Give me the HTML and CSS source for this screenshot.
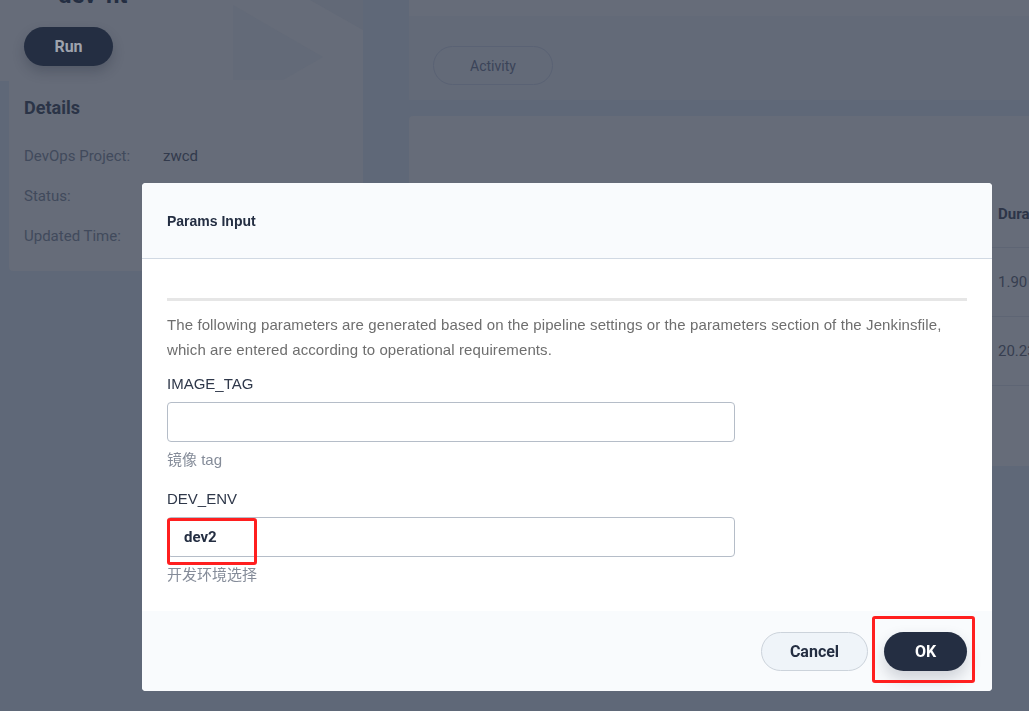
FILE: index.html
```html
<!DOCTYPE html>
<html lang="en">
<head>
    <meta charset="UTF-8">
    <title>dev-ht - Pipeline</title>
    <meta name="viewport" content="width=device-width, initial-scale=1">
    <link rel="stylesheet" href="styles.css">
</head>
<body>

    <div class="page">
        <aside class="side">
            <div class="side-top">
                <svg class="side-mark" width="363" height="81" viewBox="0 0 363 81">
                    <polygon points="233,5 323,57 283,80 233,80" fill="#636a78"/>
                    <polygon points="310,0 363,0 363,30" fill="#626977"/>
                </svg>
                <div class="pipe-title">
                    <svg width="14" height="14" viewBox="0 0 14 14">
                        <circle cx="4" cy="7" r="3" fill="none" stroke="#3a4357" stroke-width="1.5"/>
                        <path d="M7 7h6" stroke="#3a4357" stroke-width="1.5"/>
                    </svg>
                    <h1>dev-ht</h1>
                </div>
                <button class="run-btn">Run</button>
            </div>

            <div class="details">
                <h3>Details</h3>
                <div class="detail-row"><span class="detail-label">DevOps Project:</span><span class="detail-value">zwcd</span></div>
                <div class="detail-row"><span class="detail-label">Status:</span><span class="detail-value">Success</span></div>
                <div class="detail-row"><span class="detail-label">Updated Time:</span><span class="detail-value">2023-05-12 10:21:40</span></div>
            </div>
        </aside>

        <main class="content">
            <div class="card top-card"></div>
            <div class="card tabs-card">
                <button class="tab-btn">Activity</button>
            </div>
            <div class="card table-card">
                <div class="table-toolbar"></div>
                <div class="table-row table-head">
                    <span>Run ID / Status</span>
                    <span>Duration</span>
                    <span>Updated Time</span>
                </div>
                <div class="table-row">
                    <span>2 · Success</span>
                    <span>1.90 s</span>
                    <span>2023-05-12 10:21:40</span>
                </div>
                <div class="table-row">
                    <span>1 · Success</span>
                    <span>20.23 s</span>
                    <span>2023-05-12 10:18:02</span>
                </div>
                <div class="table-foot"></div>
            </div>
        </main>
    </div>

    <div class="mask">
        <div class="modal">
            <div class="modal-header">Params Input</div>

            <div class="modal-body">
                <div class="modal-bar"></div>
                <p class="modal-desc">The following parameters are generated based on the pipeline settings or the parameters section of the Jenkinsfile, which are entered according to operational requirements.</p>

                <label class="field-label">IMAGE_TAG</label>
                <input class="field-input" type="text" value="">
                <div class="field-hint">镜像 tag</div>

                <label class="field-label second">DEV_ENV</label>
                <input class="field-input" type="text" value="dev2">
                <div class="field-hint">开发环境选择</div>
            </div>

            <div class="modal-footer">
                <button class="btn btn-cancel">Cancel</button>
                <button class="btn btn-ok">OK</button>
            </div>

            <!-- red highlight boxes from the screenshot -->
            <div class="mark mark-input"></div>
            <div class="mark mark-ok"></div>
        </div>
    </div>

</body>
</html>
```

FILE: styles.css
```css
body {
    margin: 0;
    background: #5f6878;
    font-family: Roboto, "Liberation Sans", sans-serif;
    font-size: 14px;
    overflow: hidden;
}

button {
    font-family: Roboto, "Liberation Sans", sans-serif;
    cursor: pointer;
}

.page {
    display: flex;
    gap: 46px;
    width: 1300px;
}

/* left column */

.side {
    width: 363px;
    flex-shrink: 0;
}

.side-top {
    position: relative;
    display: flex;
    flex-direction: column;
    align-items: flex-start;
    height: 81px;
    padding-left: 24px;
    box-sizing: border-box;
    background: #666c79;
}

.side-mark {
    position: absolute;
    left: 0;
    top: 0;
}

.pipe-title {
    position: relative;
    display: flex;
    align-items: center;
    gap: 16px;
    height: 32px;
    margin-top: -21px;
    margin-bottom: 16px;
    padding-left: 4px;
}

.pipe-title h1 {
    margin: 0;
    font-size: 24px;
    line-height: 32px;
    color: #242e42;
}

.run-btn {
    position: relative;
    width: 89px;
    height: 39px;
    border: none;
    border-radius: 20px;
    background: #242e42;
    color: #9ea3ad;
    font-size: 16px;
    font-weight: bold;
    box-shadow: 0 6px 12px rgba(30, 38, 55, 0.25);
}

.details {
    margin-left: 9px;
    padding: 15px;
    background: #666c79;
    border-radius: 0 0 4px 4px;
}

.details h3 {
    margin: 0 0 16px;
    font-size: 18px;
    line-height: 24px;
    color: #2b3447;
}

.detail-row {
    display: flex;
    height: 40px;
    align-items: center;
    font-size: 15px;
}

.detail-label {
    width: 139px;
    color: #414a5c;
}

.detail-value {
    color: #323a4c;
}

/* right column */

.content {
    flex: 1;
    display: flex;
    flex-direction: column;
}

.card {
    background: #666c79;
}

.top-card {
    height: 16px;
}

.tabs-card {
    height: 84px;
    padding: 30px 24px 0;
    box-sizing: border-box;
    background: #636a78;
}

.tab-btn {
    width: 120px;
    height: 39px;
    border: 1px solid #5a6274;
    border-radius: 20px;
    background: transparent;
    color: #3b4459;
    font-size: 14px;
}

.table-card {
    margin-top: 16px;
    height: 350px;
    border-radius: 4px;
}

.table-toolbar {
    height: 64px;
}

.table-row {
    display: grid;
    grid-template-columns: 565px 150px 1fr;
    align-items: center;
    height: 69px;
    padding-left: 24px;
    border-bottom: 1px solid #5e6574;
    box-sizing: border-box;
    font-size: 15px;
    color: #363e50;
}

.table-head {
    height: 68px;
    font-weight: bold;
    color: #2d3548;
}

.table-foot {
    height: 80px;
}

/* modal */

.mask {
    position: fixed;
    inset: 0;
}

.modal {
    position: absolute;
    left: 142px;
    top: 183px;
    width: 850px;
    background: #fff;
    border-radius: 4px;
    overflow: hidden;
    font-family: "Liberation Sans", Arial, "Noto Sans CJK SC", sans-serif;
    font-size: 15px;
}

.modal-header {
    height: 75px;
    padding-left: 25px;
    display: flex;
    align-items: center;
    background: #f9fbfd;
    border-bottom: 1px solid #d1d9e3;
    font-weight: bold;
    font-size: 14px;
    color: #242e42;
}

.modal-body {
    padding: 39px 25px 26px;
}

.modal-bar {
    height: 3px;
    background: #e6e6e6;
}

.modal-desc {
    margin: 11px 0 0;
    line-height: 25px;
    letter-spacing: 0.1px;
    color: #6e6e6e;
}

.field-label {
    display: block;
    margin-top: 12px;
    line-height: 20px;
    color: #2f384a;
}

.field-label.second {
    margin-top: 19px;
}

.field-input {
    display: block;
    width: 568px;
    height: 40px;
    margin-top: 8px;
    padding: 0 16px;
    box-sizing: border-box;
    border: 1px solid #b5bdc8;
    border-radius: 4px;
    font-family: Roboto, "Liberation Sans", sans-serif;
    font-size: 15px;
    font-weight: bold;
    color: #242e42;
    outline: none;
}

.field-hint {
    margin-top: 8px;
    line-height: 20px;
    color: #858c99;
}

.modal-footer {
    display: flex;
    justify-content: flex-end;
    align-items: center;
    gap: 16px;
    height: 80px;
    padding: 0 25px;
    background: #f9fbfd;
}

.btn {
    height: 39px;
    border-radius: 20px;
    font-size: 16px;
    font-weight: bold;
}

.btn-cancel {
    width: 107px;
    border: 1px solid #ccd3db;
    background: #eff4f9;
    color: #242e42;
}

.btn-ok {
    width: 83px;
    border: none;
    background: #242e42;
    color: #fff;
    box-shadow: 0 8px 16px rgba(36, 46, 66, 0.2);
}

.mark {
    position: absolute;
    border: 3px solid #ff1f1f;
    border-radius: 3px;
}

.mark-input {
    left: 25px;
    top: 335px;
    width: 84px;
    height: 41px;
}

.mark-ok {
    left: 730px;
    top: 433px;
    width: 97px;
    height: 61px;
}
```
